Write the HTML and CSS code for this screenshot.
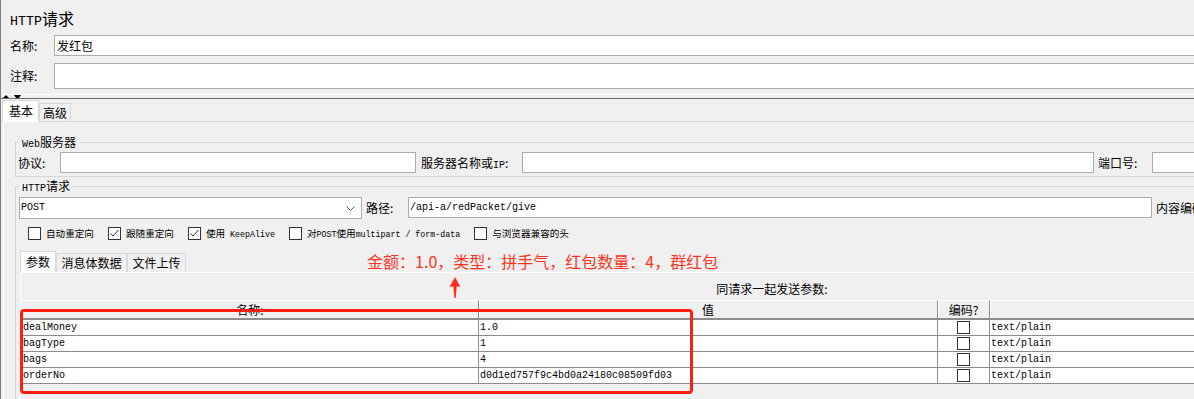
FILE: index.html
```html
<!DOCTYPE html>
<html lang="zh-CN">
<head>
    <meta charset="UTF-8">
    <meta name="viewport" content="width=device-width, initial-scale=1.0">
    <title>HTTP请求</title>
    <link rel="stylesheet" href="styles.css">
</head>
<body>

    <div class="window">
        <div class="title"><span class="en">HTTP</span>请求</div>
        <div class="row name-row">
            <label>名称:</label>
            <input class="field" type="text" value="发红包">
        </div>
        <div class="row comment-row">
            <label>注释:</label>
            <input class="field" type="text">
        </div>
        <div class="split">
            <svg width="22" height="3" viewBox="0 0 22 3"><polygon points="5,0 8,3 2,3"/><polygon points="13,0 20,0 18,3 15,3"/></svg>
        </div>
        <div class="tabs">
            <div class="tab active">基本</div>
            <div class="tab">高级</div>
        </div>

        <div class="tab-body">
            <fieldset class="group server">
                <legend><span class="en">Web</span>服务器</legend>
                <div class="line">
                    <label class="lbl-protocol">协议:</label>
                    <input class="field protocol" type="text">
                    <label class="lbl-host">服务器名称或<span class="en">IP</span>:</label>
                    <input class="field host" type="text">
                    <label class="lbl-port">端口号:</label>
                    <input class="field port" type="text">
                </div>
            </fieldset>

            <fieldset class="group request">
                <legend><span class="en">HTTP</span>请求</legend>
                <div class="line">
                    <div class="combo">
                        <span class="en">POST</span>
                        <svg width="9" height="5" viewBox="0 0 9 5"><polyline points="0.5,0.5 4.5,4.5 8.5,0.5" fill="none" stroke="#555" stroke-width="1"/></svg>
                    </div>
                    <label class="lbl-path">路径:</label>
                    <input class="field path" type="text" value="/api-a/redPacket/give">
                    <label class="lbl-enc">内容编码:</label>
                    <input class="field enc" type="text">
                </div>

                <div class="checks">
                    <div class="check"><span class="box"></span><span>自动重定向</span></div>
                    <div class="check"><span class="box"><svg width="11" height="11" viewBox="0 0 11 11"><polyline points="1.5,5.5 4,8 9.5,2" fill="none" stroke="#333" stroke-width="1"/></svg></span><span>跟随重定向</span></div>
                    <div class="check"><span class="box"><svg width="11" height="11" viewBox="0 0 11 11"><polyline points="1.5,5.5 4,8 9.5,2" fill="none" stroke="#333" stroke-width="1"/></svg></span><span>使用<span class="en"> KeepAlive</span></span></div>
                    <div class="check"><span class="box"></span><span>对<span class="en">POST</span>使用<span class="en">multipart / form-data</span></span></div>
                    <div class="check"><span class="box"></span><span>与浏览器兼容的头</span></div>
                </div>

                <div class="subtabs">
                    <div class="subtab active">参数</div>
                    <div class="subtab">消息体数据</div>
                    <div class="subtab">文件上传</div>
                    <div class="note">金额：1.0，类型：拼手气，红包数量：4，群红包</div>
                </div>

                <div class="params">
                    <div class="params-title">同请求一起发送参数:</div>
                    <div class="grid">
                        <div class="th">名称:</div>
                        <div class="th">值</div>
                        <div class="th">编码?</div>
                        <div class="th"></div>

                        <div class="td">dealMoney</div>
                        <div class="td">1.0</div>
                        <div class="td enc"><span class="box"></span></div>
                        <div class="td">text/plain</div>

                        <div class="td">bagType</div>
                        <div class="td">1</div>
                        <div class="td enc"><span class="box"></span></div>
                        <div class="td">text/plain</div>

                        <div class="td">bags</div>
                        <div class="td">4</div>
                        <div class="td enc"><span class="box"></span></div>
                        <div class="td">text/plain</div>

                        <div class="td">orderNo</div>
                        <div class="td">d0d1ed757f9c4bd0a24180c08509fd03</div>
                        <div class="td enc"><span class="box"></span></div>
                        <div class="td">text/plain</div>
                    </div>
                </div>
            </fieldset>
        </div>

        <!-- annotation drawn over the screenshot -->
        <div class="mark"></div>
        <svg class="arrow" width="12" height="21" viewBox="0 0 12 21">
            <path d="M6 0 L11.5 10 L7.7 9.3 L6.7 21 L5.3 21 L4.3 9.3 L0.5 10 Z" fill="#ff2d1e"/>
        </svg>
    </div>

</body>
</html>
```

FILE: styles.css
```css
body {
    margin: 0;
    height: 399px;
    overflow: hidden;
    background-color: #f0f0f0;
    font-family: "Noto Sans CJK SC", sans-serif;
    font-size: 12px;
    color: #000;
}

.en {
    font-family: "Liberation Mono", monospace;
    font-size: 10px;
    line-height: 1;
}

.window {
    position: relative;
    width: 1531px;
    border-left: 1px solid #7f7f7f;
}

.title {
    height: 20px;
    padding: 8px 0 0 9px;
    font-size: 16px;
    line-height: 20px;
}

.title .en {
    font-size: 13.3px;
}

.row {
    display: flex;
    align-items: center;
    margin-top: 7px;
    padding-left: 9px;
}

.row label {
    width: 44px;
    line-height: 16px;
}

.field {
    box-sizing: border-box;
    height: 21px;
    min-width: 0;
    margin: 0;
    padding: 0 2px;
    border: 1px solid #ababab;
    border-radius: 0;
    background-color: #fff;
    font: inherit;
    outline: none;
}

.row .field {
    flex: 1;
}

.comment-row .field {
    height: 26px;
}

.split {
    height: 3px;
    margin-top: 5px;
    border-top: 1px solid #fff;
    border-bottom: 1px solid #6b6b6b;
}

.split svg {
    display: block;
}

.tabs {
    display: flex;
    align-items: flex-end;
    height: 22px;
    padding-left: 1px;
    border-bottom: 1px solid #d9d9d9;
}

.tab {
    box-sizing: border-box;
    height: 18px;
    padding: 0 3px;
    border: 1px solid #d9d9d9;
    border-bottom: none;
    line-height: 17px;
}

.tab.active {
    height: 22px;
    margin-bottom: -1px;
    padding: 0 5px 0 6px;
    background-color: #fff;
    line-height: 20px;
}

.tab-body {
    margin-left: 2px;
    padding: 12px 6px 0 11px;
    border-left: 1px solid #fff;
}

.group {
    margin: 0;
    padding: 2px 3px 3px 2px;
    border: 1px solid #d5d5d5;
    min-width: 0;
}

.group legend {
    padding: 0 4px;
    line-height: 16px;
}

.request {
    margin-top: 1px;
    padding: 3px 3px 0 3px;
}

.request legend {
    padding: 0 3px;
}

.line {
    display: flex;
    align-items: center;
}

.line label {
    flex: none;
    line-height: 16px;
}

.lbl-protocol {
    width: 42px;
}

.protocol {
    width: 356px;
}

.lbl-host {
    width: 101px;
    margin-left: 5px;
}

.host {
    width: 572px;
}

.lbl-port {
    width: 54px;
    margin-left: 4px;
}

.port {
    flex: 1;
}

.combo {
    box-sizing: border-box;
    display: flex;
    align-items: center;
    justify-content: space-between;
    width: 343px;
    height: 22px;
    padding: 0 6px 0 1px;
    border: 1px solid #ababab;
    background-color: #fff;
}

.combo svg {
    display: block;
}

.lbl-path {
    width: 42px;
    margin-left: 4px;
}

.path {
    align-self: flex-start;
    width: 744px;
    padding: 0 1px;
    font-family: "Liberation Mono", monospace;
    font-size: 10px;
}

.lbl-enc {
    margin-left: 4px;
    margin-right: 4px;
}

.enc {
    flex: 1;
}

.checks {
    display: flex;
    align-items: center;
    gap: 14px;
    margin-top: 8px;
    padding-left: 9px;
    font-size: 9.6px;
    line-height: 13px;
}

.checks .en {
    font-size: 8.3px;
}

.check {
    display: flex;
    align-items: center;
    gap: 5px;
}

.box {
    box-sizing: border-box;
    flex: none;
    width: 13px;
    height: 13px;
    border: 1px solid #333;
    background-color: #fff;
}

.box svg {
    display: block;
}

.subtabs {
    display: flex;
    align-items: flex-end;
    height: 21px;
    margin-top: 11px;
    padding-left: 1px;
}

.subtab {
    box-sizing: border-box;
    height: 19px;
    padding: 0 4.5px;
    border: 1px solid #d9d9d9;
    border-bottom: none;
    line-height: 18px;
}

.subtab.active {
    height: 21px;
    padding: 0 5px;
    background-color: #fff;
    line-height: 20px;
}

.note {
    align-self: flex-start;
    margin-left: 181px;
    font-size: 16px;
    line-height: 20px;
    color: #ff3322;
    white-space: nowrap;
}

.params {
    margin-left: 1px;
    padding: 8px 0 20px 1px;
    border-top: 1px solid #fff;
    border-left: 1px solid #fff;
}

.params-title {
    text-align: center;
    line-height: 16px;
}

.grid {
    display: grid;
    grid-template-columns: 456px 459px 52px 1fr;
    margin-top: 3px;
}

.grid > div:not(:nth-child(4n+1)) {
    border-left: 1px solid #8c8c8c;
}

.th {
    box-sizing: border-box;
    height: 20px;
    border-top: 1px solid #fff;
    border-bottom: 2px solid #8c8c8c;
    text-align: center;
    line-height: 17px;
}

.grid > .th:not(:nth-child(4n+1)) {
    box-shadow: inset 1px 0 0 #fff;
}

.td {
    box-sizing: border-box;
    height: 16px;
    padding-left: 1px;
    border-bottom: 1px solid #8c8c8c;
    background-color: #fff;
    font-family: "Liberation Mono", monospace;
    font-size: 10px;
    line-height: 15px;
    white-space: nowrap;
}

.td.enc {
    display: flex;
    align-items: center;
    justify-content: center;
    padding-left: 0;
}

.mark {
    position: absolute;
    left: 19px;
    top: 309px;
    box-sizing: border-box;
    width: 673px;
    height: 85px;
    border: 3px solid #ff1f12;
    border-radius: 4px;
}

.arrow {
    position: absolute;
    left: 448px;
    top: 277px;
}
```
